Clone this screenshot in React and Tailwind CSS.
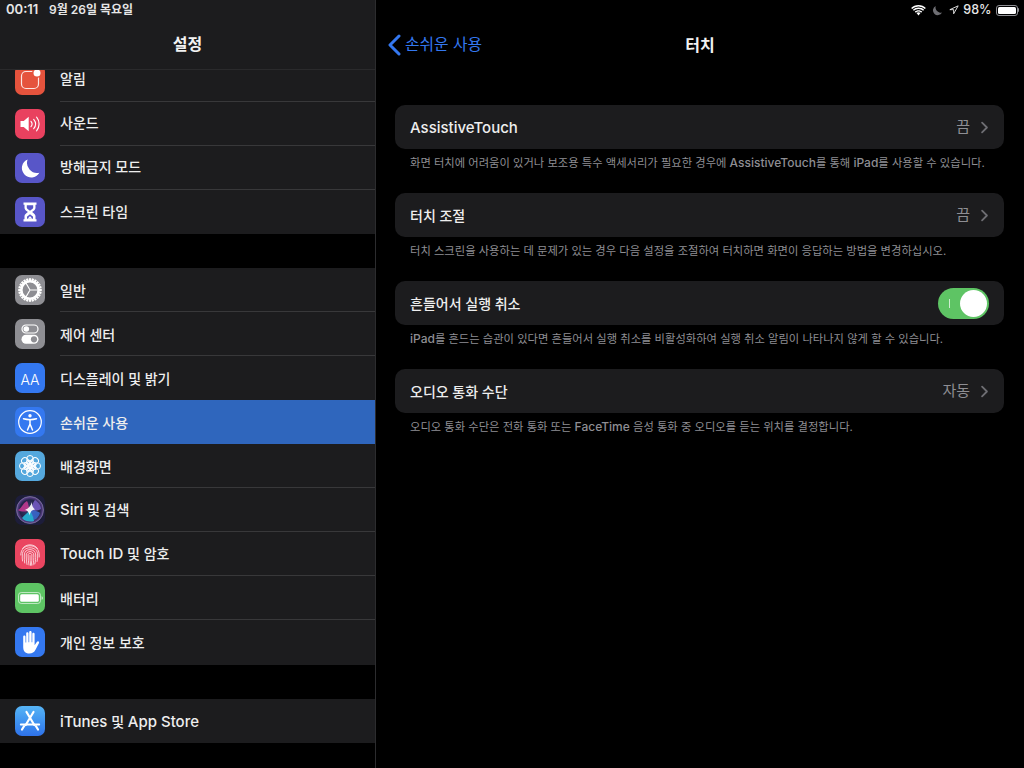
const Bell = () => (
  <svg viewBox="0 0 30 30" className="w-[30px] h-[30px]">
    <rect x="6.500" y="6.500" width="17" height="17" rx="4.500" fill="none" stroke="#fff" strokeOpacity=".85" strokeWidth="1.200" />
    <circle cx="22" cy="8" r="5" fill="#e5533d" />
    <circle cx="22" cy="8" r="3.500" fill="#fff" />
  </svg>
);
const Sound = () => (
  <svg viewBox="0 0 30 30" className="w-[30px] h-[30px]" fill="none">
    <path d="M5.500 12h3.200l5-4.200v14.400l-5-4.200H5.500z" fill="#fff" />
    <path d="M16 12.300c1.300 1.600 1.300 3.800 0 5.400M18.700 10.300c2.300 2.800 2.300 6.600 0 9.400M21.600 8.200c3.300 4 3.300 9.600 0 13.600" stroke="#fff" strokeWidth="1.100" strokeLinecap="round" />
  </svg>
);
const Moon = () => (
  <svg viewBox="0 0 30 30" className="w-[30px] h-[30px]">
    <path d="M12.600 6.400A9.400 9.400 0 1 0 24.400 19.800 10.200 10.200 0 0 1 12.600 6.400z" fill="#fff" />
  </svg>
);
const Hourglass = () => (
  <svg viewBox="0 0 30 30" className="w-[30px] h-[30px]" fill="none">
    <path d="M8.500 5.500h13v2.300h-1v3.200c0 2-2.400 3-3.400 4 1 1 3.400 2 3.400 4v3.200h1v2.300h-13v-2.300h1V19c0-2 2.400-3 3.400-4-1-1-3.400-2-3.400-4V7.800h-1z" fill="#fff" />
    <path d="M11.800 8.200h6.400v2.600c0 .8-2 1.900-3.200 2.900-1.200-1-3.200-2.100-3.200-2.900z" fill="#5856c8" />
    <path d="M15 17.200c1 .9 3 1.900 3 2.800v1.800h-6V20c0-.9 2-1.900 3-2.800z" fill="#5856c8" />
    <path d="M15 19l2.300 2.800h-4.600z" fill="#fff" />
  </svg>
);
const Gear = () => {
  const teeth = Array.from({ length: 24 }, (_, i) => i * 15);
  return (
    <svg viewBox="0 0 30 30" className="w-[30px] h-[30px]" fill="none">
      {teeth.map((a) => (
        <rect key={a} x="13.900" y="3.200" width="2.200" height="3.800" fill="#fff" transform={`rotate(${a} 15 15)`} />
      ))}
      <circle cx="15" cy="15" r="8.600" stroke="#fff" strokeWidth="2.400" />
      <path d="M15 15H23M15 15l-4 -6.900M15 15l-4 6.900" stroke="#fff" strokeWidth="1.100" />
    </svg>
  );
};
const Toggles = () => (
  <svg viewBox="0 0 30 30" className="w-[30px] h-[30px]" fill="none">
    <rect x="7" y="6" width="16" height="8" rx="4" stroke="#fff" strokeWidth="1.200" />
    <circle cx="11.300" cy="10" r="2.800" fill="#fff" />
    <rect x="6.500" y="15.800" width="17" height="9" rx="4.500" fill="#fff" />
    <circle cx="19" cy="20.300" r="3.100" fill="#8e8e93" />
  </svg>
);
const Access = () => (
  <svg viewBox="0 0 30 30" className="w-[30px] h-[30px]" fill="none">
    <circle cx="15" cy="15" r="11.300" stroke="#fff" strokeWidth="1.200" />
    <circle cx="15" cy="8.800" r="1.700" fill="#fff" />
    <path d="M8.500 11.800c4.200 1.100 8.800 1.100 13 0M15 12.600v4.700M15 17l-2.500 6M15 17l2.500 6" stroke="#fff" strokeWidth="1.500" strokeLinecap="round" />
  </svg>
);
const Flower = () => {
  const petals = [0, 45, 90, 135, 180, 225, 270, 315];
  return (
    <svg viewBox="0 0 30 30" className="w-[30px] h-[30px]" fill="none" stroke="#fff" strokeWidth="1">
      {petals.map((a) => (
        <circle key={a} cx="15" cy="7.800" r="3.300" transform={`rotate(${a} 15 15)`} />
      ))}
      {petals.map((a) => (
        <ellipse key={a} cx="15" cy="11.300" rx="1.800" ry="2.700" transform={`rotate(${a + 22.500} 15 15)`} />
      ))}
      <circle cx="15" cy="15" r="2.300" />
    </svg>
  );
};
const Siri = () => (
  <svg viewBox="0 0 30 30" className="w-[30px] h-[30px]" fill="none">
    <defs>
      <radialGradient id="siribg" cx="50%" cy="50%" r="50%">
        <stop offset="0%" stopColor="#3a3f6e" />
        <stop offset="75%" stopColor="#24234a" />
        <stop offset="100%" stopColor="#6a4a9a" />
      </radialGradient>
    </defs>
    <circle cx="15" cy="15" r="13.500" fill="url(#siribg)" stroke="#8a8aa8" strokeWidth=".6" />
    <path d="M3 15c3-1 5-7 9-9 2 3 1 6 3 9-4 2-9 2-12 0z" fill="#c0398f" fillOpacity=".9" />
    <path d="M15 15c2-3 3-8 5-10 3 2 6 5 6 9-3 2-8 2-11 1z" fill="#7d5fd0" fillOpacity=".8" />
    <path d="M15 15c-2 3-6 5-8 8 3 4 9 4 12 3 0-4-2-8-4-11z" fill="#27b8d8" fillOpacity=".9" />
    <path d="M15 15c3 0 8 1 10 3-1 3-3 6-6 7-1-3-3-7-4-10z" fill="#3c6fd8" fillOpacity=".8" />
    <path d="M17 7c-.2 3.500.5 5.500 3 7.500-3 .2-4.500 2-5.500 6-.5-3.500-2-5-4.500-5.500 3.500-1.500 5.700-4 7-8z" fill="#fff" fillOpacity=".9" />
  </svg>
);
const Finger = () => (
  <svg viewBox="0 0 30 30" className="w-[30px] h-[30px]" fill="none" stroke="#fff" strokeOpacity=".9" strokeWidth=".8" strokeLinecap="round">
    <path d="M7.500 9.500C11 4.500 19 4.500 22.500 9.500" />
    <path d="M5.800 16c0-6 4-9.200 9.200-9.200s9.200 3.200 9.200 9.200v2" />
    <path d="M7.500 22c-.4-2-.2-4-.2-6 0-4.500 3.300-7.200 7.700-7.200s7.700 2.700 7.700 7.200c0 2 0 4.500-.6 6.500" />
    <path d="M9.700 24c-.5-2.500-.4-5-.4-8 0-3.300 2.500-5.400 5.700-5.400s5.700 2.100 5.700 5.400c0 3 0 6-.9 9" />
    <path d="M12 25.500c-.6-3-.8-6-.8-9.500 0-2 1.700-3.400 3.800-3.400s3.800 1.400 3.800 3.400c0 3.500 0 7-.8 10" />
    <path d="M14 26c-.6-3-.9-6.500-.9-10 0-1 .8-1.600 1.900-1.600s1.900.6 1.900 1.600c0 3.500 0 7-.6 10.300" />
    <path d="M15 16.500c0 3.300.2 6.500.6 9.800" />
  </svg>
);
const Battery = () => (
  <svg viewBox="0 0 30 30" className="w-[30px] h-[30px]" fill="none">
    <rect x="3.500" y="9.500" width="22" height="11" rx="2.800" stroke="#fff" strokeOpacity=".6" strokeWidth="1" />
    <rect x="5.200" y="11.200" width="18.600" height="7.600" rx="1.500" fill="#fff" />
    <path d="M26.500 13.200c1 .2 1.500.9 1.500 1.800s-.5 1.600-1.500 1.800z" fill="#fff" fillOpacity=".6" />
  </svg>
);
const Hand = () => (
  <svg viewBox="0 0 30 30" className="w-[30px] h-[30px]">
    <path d="M8.200 9.500c0-1.500 2.300-1.500 2.300 0v6h.7V6.300c0-1.500 2.300-1.500 2.300 0v9h.7V5.200c0-1.500 2.400-1.500 2.400 0v10.100h.7V6.800c0-1.500 2.300-1.500 2.300 0v11.400l2.200-3.200c1-1.500 3-.4 2.100 1.200l-3.400 6.600c-1.300 2.500-3.300 3.800-6 3.800-4.500 0-6.300-2.800-6.300-6.600z" fill="#fff" />
  </svg>
);
const AppStore = () => (
  <svg viewBox="0 0 30 30" className="w-[30px] h-[30px]" fill="none" stroke="#fff" strokeWidth="2.200" strokeLinecap="round">
    <path d="M11.500 6l7.800 13M18.500 6l-7.800 13" />
    <path d="M5.800 18.500h18.400" strokeWidth="1.900" />
    <path d="M7 23.500l2-3.300M23 23.500l-2-3.300" />
  </svg>
);

const LATIN = /([A-Za-z][A-Za-z ]*[A-Za-z]|[A-Za-z])/;

const Label = ({ text }) => (
  <>
    {text.split(LATIN).map((part, i) =>
      /[A-Za-z]/.test(part) ? (
        <span key={i} className="text-[15px]">{part}</span>
      ) : (
        <span key={i} className="text-[14px]">{part}</span>
      )
    )}
  </>
);

const Note = ({ text }) => (
  <>
    {text.split(LATIN).map((part, i) =>
      /[A-Za-z]/.test(part) ? (
        <span key={i} className="text-[12px] font-medium">{part}</span>
      ) : (
        <span key={i} className="text-[11.300px]">{part}</span>
      )
    )}
  </>
);

const Row = ({ bg, icon, label, last, active, lift }) => (
  <div className={`h-[44px] flex items-center pl-[15px] ${active ? "bg-[#2f66bd]" : ""}`}>
    <div className={`w-[30px] h-[30px] rounded-[7px] shrink-0 flex items-center justify-center overflow-hidden ${bg}`}>{icon}</div>
    <div className={`ml-[15px] flex-1 h-full flex items-center font-medium text-[#eeeeee] ${lift ? "pb-[3px]" : ""} ${last || active ? "" : "border-b border-[#38383a]"}`}>
      <div className="whitespace-pre"><Label text={label} /></div>
    </div>
  </div>
);

const Chevron = () => (
  <svg viewBox="0 0 10 16" className="w-[9px] h-[13px] ml-[10px]" fill="none">
    <path d="M2 2l6 6-6 6" stroke="#6e6e73" strokeWidth="2.200" strokeLinecap="round" strokeLinejoin="round" />
  </svg>
);

const Card = ({ title, value, toggle, note }) => (
  <div>
    <div className="h-[44px] bg-[#1c1c1e] rounded-[10px] flex items-center pl-[15px] pr-[15px]">
      <span className="font-medium text-[#eeeeee]"><Label text={title} /></span>
      <span className="flex-1" />
      {value && <span className="text-[15px] text-[#8e8e93]">{value}</span>}
      {value && <Chevron />}
      {toggle && (
        <div className="relative w-[51px] h-[31px] rounded-full bg-[#5ec464]">
          <span className="absolute left-[11px] top-[11px] w-px h-[9px] bg-white/70" />
          <span className="absolute right-[2px] top-[2px] w-[27px] h-[27px] rounded-full bg-white" />
        </div>
      )}
    </div>
    <p className="h-[44px] pl-[15px] pt-[4px] leading-[16px] text-[#8e8e93] whitespace-nowrap"><Note text={note} /></p>
  </div>
);

export default function App() {
  return (
    <div
      className="relative w-[1024px] h-[768px] overflow-hidden bg-black flex text-white"
      style={{ fontFamily: '"Inter", "Noto Sans CJK KR", sans-serif' }}
    >
      <div className="absolute inset-x-0 top-0 h-[20px] flex items-center justify-between pl-[6px] pr-[5px] font-semibold text-[#e6e6e6] z-10">
        <div className="flex items-center">
          <span className="w-[43px] text-[13px]">00:11</span>
          <span className="text-[12px]">9월 26일 목요일</span>
        </div>
        <div className="flex items-center text-[12.500px]">
          <svg viewBox="0 0 16 12" className="w-[15px] h-[11px]" fill="#fff">
            <path d="M8 11.500l-2.200-2.700a3.400 3.400 0 0 1 4.400 0z" />
            <path d="M8 5.700c1.600 0 3 .6 4 1.500l-1 1.200a4.700 4.700 0 0 0-6 0l-1-1.200c1-.9 2.400-1.500 4-1.500z" />
            <path d="M8 2.800c2.400 0 4.500.9 6.100 2.300l-1 1.200A7.500 7.500 0 0 0 8 4.300a7.500 7.500 0 0 0-5.100 2L1.900 5.100A9 9 0 0 1 8 2.800z" />
            <path d="M8 0c3.200 0 6 1.200 8 3.200l-1 1.100A10.300 10.300 0 0 0 8 1.500 10.300 10.300 0 0 0 1 4.300L0 3.200C2 1.200 4.800 0 8 0z" />
          </svg>
          <svg viewBox="0 0 12 12" className="w-[11px] h-[11px] ml-[6px]">
            <path d="M4 1A5.300 5.300 0 1 0 11 8.300 6 6 0 0 1 4 1z" fill="#6e6e73" />
          </svg>
          <svg viewBox="0 0 12 12" className="w-[10px] h-[10px] ml-[6px]" fill="none">
            <path d="M11 1L1 5.600h4.600V10.500z" stroke="#fff" strokeWidth="1" strokeLinejoin="round" />
          </svg>
          <span className="ml-[4px] font-medium">98%</span>
          <div className="ml-[4px] w-[22px] h-[11px] rounded-[3px] border border-[#8e8e93] p-px">
            <div className="w-full h-full rounded-[1.500px] bg-white" />
          </div>
          <div className="w-[1.500px] h-[4px] bg-[#8e8e93] rounded-r-sm" />
        </div>
      </div>

      <aside className="w-[376px] shrink-0 h-full bg-black border-r border-[#2c2c2e] flex flex-col">
        <header className="h-[70px] shrink-0 bg-[#1c1c1e] border-b border-[#2a2a2c] flex items-center justify-center pt-[19px]">
          <h1 className="text-[16px] font-semibold text-[#f2f2f2]">설정</h1>
        </header>
        <div className="flex-1 overflow-hidden">
          <div className="-mt-[12px] bg-[#1c1c1e]">
            <Row lift bg="bg-[#e5533d]" icon={<Bell />} label="알림" />
            <Row lift bg="bg-[#e9415f]" icon={<Sound />} label="사운드" />
            <Row lift bg="bg-[#5856c8]" icon={<Moon />} label="방해금지 모드" />
            <Row lift bg="bg-[#5856c8]" icon={<Hourglass />} label="스크린 타임" last />
          </div>
          <div className="mt-[34px] pb-px bg-[#1c1c1e]">
            <Row bg="bg-[#8e8e93]" icon={<Gear />} label="일반" />
            <Row bg="bg-[#8e8e93]" icon={<Toggles />} label="제어 센터" />
            <Row bg="bg-[#3478f0]" icon={<span className="text-[14px] font-light text-white pt-[2px]">AA</span>} label="디스플레이 및 밝기" last />
            <Row bg="bg-[#3478f0]" icon={<Access />} label="손쉬운 사용" active />
            <Row bg="bg-[#55a8dd]" icon={<Flower />} label="배경화면" />
            <Row bg="bg-[#1d1d3a]" icon={<Siri />} label="Siri 및 검색" />
            <Row bg="bg-[#ea4560]" icon={<Finger />} label="Touch ID 및 암호" />
            <Row bg="bg-[#5ec464]" icon={<Battery />} label="배터리" />
            <Row bg="bg-[#3478f0]" icon={<Hand />} label="개인 정보 보호" last />
          </div>
          <div className="mt-[34px] bg-[#1c1c1e]">
            <Row bg="bg-gradient-to-b from-[#56b4f5] to-[#2f72ea]" icon={<AppStore />} label="iTunes 및 App Store" last />
          </div>
        </div>
      </aside>

      <main className="flex-1 min-w-0 flex flex-col">
        <header className="h-[70px] shrink-0 relative flex items-center justify-center pt-[19px]">
          <div className="absolute left-[11px] top-[33px] flex items-center text-[#3478f0]">
            <svg viewBox="0 0 14 22" className="w-[14px] h-[22px]" fill="none">
              <path d="M12 2L3 11l9 9" stroke="#3478f0" strokeWidth="3" strokeLinecap="round" strokeLinejoin="round" />
            </svg>
            <span className="ml-[4px] text-[15.800px] font-normal">손쉬운 사용</span>
          </div>
          <h2 className="text-[16px] font-semibold text-[#f2f2f2]">터치</h2>
        </header>
        <div className="pt-[35px] pl-[19px] pr-[20px]">
          <Card title="AssistiveTouch" value="끔" note="화면 터치에 어려움이 있거나 보조용 특수 액세서리가 필요한 경우에 AssistiveTouch를 통해 iPad를 사용할 수 있습니다." />
          <Card title="터치 조절" value="끔" note="터치 스크린을 사용하는 데 문제가 있는 경우 다음 설정을 조절하여 터치하면 화면이 응답하는 방법을 변경하십시오." />
          <Card title="흔들어서 실행 취소" toggle note="iPad를 흔드는 습관이 있다면 흔들어서 실행 취소를 비활성화하여 실행 취소 알림이 나타나지 않게 할 수 있습니다." />
          <Card title="오디오 통화 수단" value="자동" note="오디오 통화 수단은 전화 통화 또는 FaceTime 음성 통화 중 오디오를 듣는 위치를 결정합니다." />
        </div>
      </main>
    </div>
  );
}
